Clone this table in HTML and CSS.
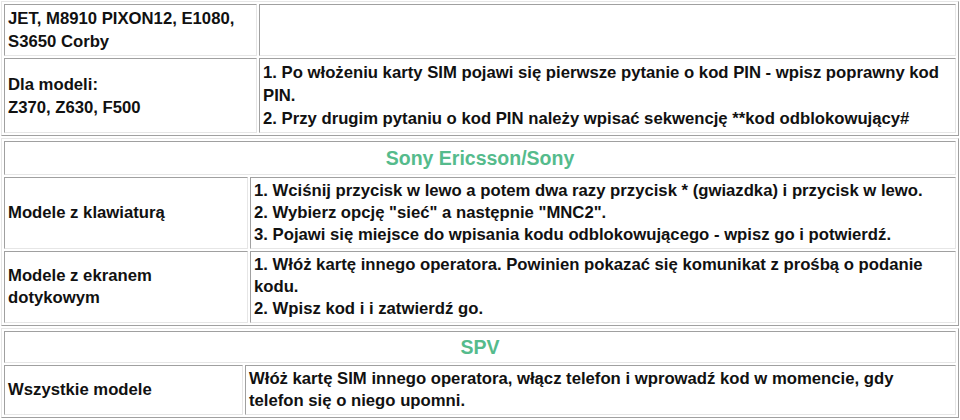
FILE: index.html
```html
<!DOCTYPE html>
<html lang="pl">
<head>
<meta charset="utf-8">
<link rel="stylesheet" href="styles.css">
</head>
<body>
<table class="tbl t1">
  <colgroup><col class="c1"><col></colgroup>
  <tr><td>JET, M8910 PIXON12, E1080,<br>S3650 Corby</td><td></td></tr>
  <tr><td>Dla modeli:<br>Z370, Z630, F500</td><td>1. Po włożeniu karty SIM pojawi się pierwsze pytanie o kod PIN - wpisz poprawny kod<br>PIN.<br>2. Przy drugim pytaniu o kod PIN należy wpisać sekwencję **kod odblokowujący#</td></tr>
</table>
<table class="tbl t2">
  <colgroup><col class="c2"><col></colgroup>
  <tr><td colspan="2" class="head">Sony Ericsson/Sony</td></tr>
  <tr><td>Modele z klawiaturą</td><td>1. Wciśnij przycisk w lewo a potem dwa razy przycisk * (gwiazdka) i przycisk w lewo.<br>2. Wybierz opcję "sieć" a następnie "MNC2".<br>3. Pojawi się miejsce do wpisania kodu odblokowującego - wpisz go i potwierdź.</td></tr>
  <tr><td>Modele z ekranem<br>dotykowym</td><td>1. Włóż kartę innego operatora. Powinien pokazać się komunikat z prośbą o podanie<br>kodu.<br>2. Wpisz kod i i zatwierdź go.</td></tr>
</table>
<table class="tbl t3">
  <colgroup><col class="c3"><col></colgroup>
  <tr><td colspan="2" class="head">SPV</td></tr>
  <tr><td>Wszystkie modele</td><td>Włóż kartę SIM innego operatora, włącz telefon i wprowadź kod w momencie, gdy<br>telefon się o niego upomni.</td></tr>
</table>
</body>
</html>
```

FILE: styles.css
```css
html, body {
  margin: 0;
  padding: 0;
  background: #ffffff;
}
body {
  padding-top: 1px;
  padding-left: 1px;
  font-family: "Liberation Sans", Arial, Helvetica, sans-serif;
  font-size: 16.7px;
  font-weight: bold;
  color: #111;
}
.tbl {
  width: 958px;
  table-layout: fixed;
  border-collapse: separate;
  border-spacing: 2px;
  border: 1px solid;
  border-color: #e6e6e6 #a0a0a0 #a0a0a0 #e6e6e6;
  margin: 0 0 2px 0;
}
.tbl td {
  border: 1px solid;
  border-color: #a0a0a0 #e6e6e6 #e6e6e6 #a0a0a0;
  padding: 2px 3px;
  line-height: 23px;
  vertical-align: middle;
  white-space: nowrap;
}
.t1 tr:first-child td { height: 46px; }
.t2 td, .t3 td { line-height: 22px; }
.c1 { width: 253px; }
.c2 { width: 244px; }
.c3 { width: 239px; }
.tbl td.head {
  text-align: center;
  color: #55bb8c;
  font-size: 19.5px;
  line-height: 24px;
  padding: 4px 3px;
}
.t3 td.head { padding: 3px; }
```
